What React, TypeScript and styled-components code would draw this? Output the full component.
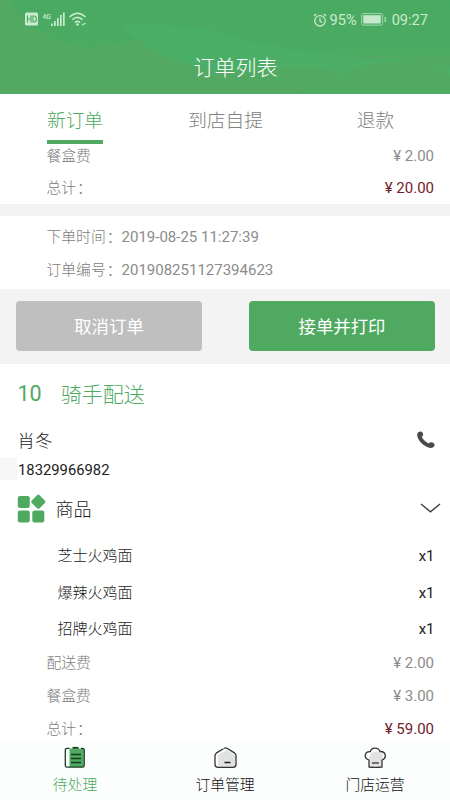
import React from 'react';
import styled, { createGlobalStyle } from 'styled-components';

const GREEN = '#4fa961';

const GlobalStyle = createGlobalStyle`
  * { box-sizing: border-box; }
  body { margin: 0; background: #fff; }
`;

const Screen = styled.div`
  width: 450px;
  height: 800px;
  display: flex;
  flex-direction: column;
  overflow: hidden;
  background: #fefffe;
  color: #222;
  font-family: Roboto, 'Noto Sans CJK SC', sans-serif;
  font-size: 14.8px;
  font-weight: 300;
  white-space: pre;
`;

const Header = styled.header`
  flex: none;
  height: 94px;
  display: grid;
  grid-template-rows: 39px 55px;
  color: #fff;
  background: ${GREEN};
  overflow: hidden;
`;

const HeaderWaves = styled.svg`
  grid-area: 1 / 1 / 3 / 2;
  display: block;
`;

const StatusBar = styled.div`
  grid-area: 1 / 1 / 2 / 2;
  z-index: 1;
  display: flex;
  align-items: center;
  justify-content: space-between;
  padding: 0 22px 0 25px;
  color: #caebd0;
  font-size: 14.6px;
  font-weight: 400;
`;

const StatusGroup = styled.div`
  display: flex;
  align-items: center;
`;

const Percent = styled.span`
  margin: 0 4px 0 3px;
`;

const Clock = styled.span`
  margin-left: 5px;
`;

const Title = styled.h1`
  grid-area: 2 / 1 / 3 / 2;
  z-index: 1;
  margin: 0;
  padding-left: 21px;
  text-align: center;
  font-size: 21px;
  line-height: 58px;
  font-weight: 300;
`;

const Tabs = styled.nav`
  flex: none;
  height: 50px;
  display: grid;
  grid-template-columns: 150px 151px 149px;
  justify-items: center;
`;

const Tab = styled.div<{ $active?: boolean }>`
  height: 50px;
  line-height: 54px;
  font-size: 18.7px;
  color: ${p => (p.$active ? GREEN : '#808080')};
  border-bottom: 4px solid ${p => (p.$active ? GREEN : 'transparent')};
`;

const Summary = styled.section<{ $height: number; $top?: number }>`
  flex: none;
  height: ${p => p.$height}px;
  padding: ${p => p.$top ?? 0}px 16px 0 46.5px;
`;

const Line = styled.div<{ $first?: boolean }>`
  display: flex;
  justify-content: space-between;
  height: ${p => (p.$first ? 28 : 33)}px;
  line-height: ${p => (p.$first ? 24 : 33)}px;
  color: #7c7c7c;
`;

const Detail = styled.div`
  display: flex;
  height: 33px;
  line-height: 34px;
  color: #7c7c7c;
`;

const Colon = styled.span`
  margin: 0 -1px 0 1px;
`;

const Value = styled.span`
  margin-left: 1px;
  color: #8c8c8c;
  font-size: 15px;
  font-weight: 400;
`;

const Total = styled.span`
  color: #74202b;
  font-size: 15px;
  font-weight: 400;
`;

const Divider = styled.div`
  flex: none;
  height: 12px;
  background: #f3f3f3;
`;

const Actions = styled.div`
  flex: none;
  height: 75px;
  display: flex;
  justify-content: space-between;
  padding: 12px 15px 0 16px;
  background: #f3f3f3;
`;

const ActionButton = styled.button<{ $primary?: boolean }>`
  width: 186px;
  height: 50px;
  padding: 2px 0 0;
  border: 0;
  border-radius: 4px;
  background: ${p => (p.$primary ? GREEN : '#bfbfbf')};
  color: #fff;
  font: 400 17.4px/48px Roboto, 'Noto Sans CJK SC', sans-serif;
`;

const Order = styled.section`
  flex: 1;
  min-height: 0;
  overflow: hidden;
`;

const OrderHeading = styled.h2`
  display: flex;
  align-items: center;
  gap: 19px;
  height: 58px;
  margin: 0;
  padding-left: 17.5px;
  color: ${GREEN};
  font-size: 21px;
  font-weight: 300;
`;

const OrderNumber = styled.span`
  font-size: 21.5px;
  font-weight: 400;
`;

const Customer = styled.div`
  display: flex;
  justify-content: space-between;
  align-items: center;
  height: 35px;
  padding: 0 15px 0 17.5px;
  font-size: 17.4px;
`;

const Phone = styled.div`
  height: 24px;
  line-height: 26px;
  padding-left: 18px;
  font-weight: 400;
  background: linear-gradient(#f7f7f7, #f7f7f7) 0 1px / 17px 22px no-repeat;
`;

const GoodsHeading = styled.div`
  display: flex;
  align-items: center;
  height: 54px;
  padding: 0 9px 0 17px;
  font-size: 18px;
`;

const GoodsName = styled.span`
  flex: 1;
  margin: -1px 0 0 9.5px;
`;

const Products = styled.div`
  padding-top: 2px;
`;

const Product = styled.div`
  display: flex;
  justify-content: space-between;
  height: 36.5px;
  line-height: 38px;
  padding: 0 15.5px 0 57.5px;
  font-size: 15px;
  font-weight: 300;
`;

const Quantity = styled.span`
  font-weight: 400;
`;

const BottomNav = styled.nav`
  flex: none;
  height: 60px;
  display: grid;
  grid-template-columns: repeat(3, 1fr);
  background: #fcfefd;
`;

const NavItem = styled.div<{ $active?: boolean }>`
  display: flex;
  flex-direction: column;
  align-items: center;
  padding-top: 6px;
  line-height: 24px;
  color: ${p => (p.$active ? GREEN : '#111')};
  svg { display: block; margin-bottom: 4px; }
`;

const Waves = () => (
  <HeaderWaves width="450" height="94" viewBox="0 0 450 94">
    <defs>
      <linearGradient id="sky" x1="0" y1="0" x2="0" y2="1">
        <stop offset="0" stopColor="#49aa61" />
        <stop offset="1" stopColor="#4eab63" />
      </linearGradient>
      <linearGradient id="band" x1="0" y1="0" x2="0" y2="1">
        <stop offset="0" stopColor="#48b06a" />
        <stop offset="1" stopColor="#4db26d" />
      </linearGradient>
    </defs>
    <rect width="450" height="94" fill="url(#sky)" />
    <path d="M0 0H10C25 28 58 47 94 47C112 46 126 42 137 38C160 52 174 62 202 66C226 70 253 67 284 60L330 55H450V94H0Z" fill="#51a962" />
    <path d="M120 26C158 23 189 25 218 32C252 43 284 49 323 53C354 58 370 60 399 58C423 56 437 64 450 67V94H365C345 72 320 64 284 67C244 72 203 75 181 62C151 51 137 39 120 26Z" fill="url(#band)" opacity=".6" />
    <path d="M330 78C365 65 382 60 413 59C432 60 440 68 450 76V94H300Z" fill="#51aa61" />
  </HeaderWaves>
);

const SignalIcons = () => (
  <svg width="63" height="17" viewBox="25 10.5 63 17" fill="#caebd0">
    <rect x="25" y="12" width="13" height="13" rx="1.5" />
    <path d="M27.5 15v7M31 15v7M27.5 18.5H31M33 15.5v6h1.2c3 0 3-6 0-6Z" fill="none" stroke={GREEN} strokeWidth="1.2" />
    <text x="42.5" y="18" fontSize="7.5" fontWeight="500" fontFamily="Roboto, sans-serif" textLength="8.5" lengthAdjust="spacingAndGlyphs">4G</text>
    <path d="M51 23h1.7v2.5H51zM54 20.5h1.7v5H54zM57 17.5h1.7v8H57zM60 14.5h1.7v11H60zM63 12h1.7v13.5H63z" />
    <path d="M69.5 16.5q8-7.5 16 0M72.3 19.2q5.2-4.7 10.4 0M74.8 22q2.7-2.3 5.4 0" fill="none" stroke="#caebd0" strokeWidth="1.5" />
    <circle cx="77.5" cy="24" r="1.3" />
    <path d="m81.5 24.7 1.2-2 1.2 2zM83.5 22.5h2.4l-1.2 2z" />
  </svg>
);

const AlarmIcon = () => (
  <svg width="14" height="14" viewBox="0 0 14 14" fill="none" stroke="#caebd0" strokeWidth="1.3">
    <circle cx="7" cy="7.8" r="5.2" />
    <path d="M7 4.8v3.3l2.2 1.3M1 3l2.3-2M13 3l-2.3-2" />
  </svg>
);

const BatteryIcon = () => (
  <svg width="26" height="13" viewBox="0 0 26 13">
    <rect x=".6" y=".6" width="21" height="11.5" rx="1.3" fill="none" stroke="#9fd7ab" />
    <rect x="2.2" y="2.2" width="17.6" height="8.3" fill="#c6e8cc" />
    <path d="M24.3 4v5" stroke="#9fd7ab" strokeWidth="1.5" />
  </svg>
);

const PhoneIcon = () => (
  <svg width="18" height="18" viewBox="0 0 18 18">
    <path d="M1.3 1.3C2.6.2 4.6.1 5.5 1.5c1 1.6.8 3.2-.8 4.3 1.2 2.5 3.8 5.2 6.9 6.6 1.2-1.3 3.3-1.6 4.9-.4 1.6 1.2 1.5 2.9 0 4-1.8 1.3-4.4 1.4-7.8-.7C4.500 13 1 9 .3 5.100.1 3.500.3 2.100 1.300 1.300Z" fill="#4a4a4a" />
  </svg>
);

const GoodsIcon = () => (
  <svg width="29" height="29" viewBox="0 0 29 29" fill={GREEN}>
    <rect x=".8" y="2" width="12" height="12" rx="2.2" />
    <rect x=".8" y="16.5" width="12" height="12" rx="2.2" />
    <rect x="15.3" y="16.5" width="12" height="12" rx="2.2" />
    <rect x="15.8" y="2.2" width="11" height="11" rx="1.8" transform="rotate(45 21.3 7.7)" />
  </svg>
);

const ChevronIcon = () => (
  <svg width="21" height="10" viewBox="0 0 21 10" fill="none" stroke="#444" strokeWidth="1.5">
    <path d="m1 1 9.5 7.8L20 1" />
  </svg>
);

const PendingIcon = () => (
  <svg width="22" height="23" viewBox="0 0 22 23" fill="none">
    <path d="M5.5 2.5h13q1.2 0 1.2 1.5v15.5q0 1.5-1.2 1.5h-13z" fill={GREEN} />
    <path d="M5.5 2.3H3q-1.7 0-1.7 1.7v15.5q0 1.7 1.7 1.7h15.5q1.7 0 1.7-1.7V4q0-1.7-1.7-1.7h-1.5M7 8.5h10M7 12.5h10M7 16.5h10" stroke="#183c22" strokeWidth="1.3" />
    <path d="M8.5 1.8h6" stroke="#183c22" strokeWidth="1.8" />
  </svg>
);

const HouseIcon = () => (
  <svg width="23" height="23" viewBox="0 0 23 23" fill="none">
    <path d="M4 9 13 4l8 5v12H5q-1 0-1-1Z" fill="#e0e2e1" />
    <path d="M9.5 2.7 2.5 6.9Q1 8 1 9.5v9Q1 21.3 4 21.3h15q3 0 3-2.8v-9Q22 8 20.5 6.9l-7.6-4.6q-1.4-1-2.7.2" stroke="#333" strokeWidth="1.3" />
    <path d="M10.5 16.5h6" stroke="#222" strokeWidth="1.5" />
  </svg>
);

const ChefHatIcon = () => (
  <svg width="23" height="23" viewBox="0 0 23 23" fill="none">
    <path d="M7 7q7-4 12 1l-1.5 12H6.5L5 12Z" fill="#e2e2e2" />
    <path d="M5 21V14C-.4 12.4.1 5.4 6.3 5.7 7.4 1 14.6 1 15.9 5.5c6.3-.4 7.2 6.8 2.1 8.5v7Q11.5 21.8 5 21Z" stroke="#333" strokeWidth="1.3" strokeLinejoin="round" />
    <path d="M8 17h7" stroke="#333" strokeWidth="1.3" />
  </svg>
);

const products = ['芝士火鸡面', '爆辣火鸡面', '招牌火鸡面'];

export default function App() {
  return (
    <Screen>
      <GlobalStyle />
      <Header>
        <Waves />
        <StatusBar>
          <SignalIcons />
          <StatusGroup>
            <AlarmIcon />
            <Percent>95%</Percent>
            <BatteryIcon />
            <Clock>09:27</Clock>
          </StatusGroup>
        </StatusBar>
        <Title>订单列表</Title>
      </Header>
      <Tabs>
        <Tab $active>新订单</Tab>
        <Tab>到店自提</Tab>
        <Tab>退款</Tab>
      </Tabs>
      <Summary $height={60}>
        <Line $first><span>餐盒费</span><Value>¥ 2.00</Value></Line>
        <Line><span>总计<Colon>：</Colon></span><Total>¥ 20.00</Total></Line>
      </Summary>
      <Divider />
      <Summary $height={73} $top={4}>
        <Detail>下单时间<Colon>：</Colon><Value>2019-08-25 11:27:39</Value></Detail>
        <Detail>订单编号<Colon>：</Colon><Value>201908251127394623</Value></Detail>
      </Summary>
      <Actions>
        <ActionButton>取消订单</ActionButton>
        <ActionButton $primary>接单并打印</ActionButton>
      </Actions>
      <Order>
        <OrderHeading><OrderNumber>10</OrderNumber>骑手配送</OrderHeading>
        <Customer>肖冬<PhoneIcon /></Customer>
        <Phone>18329966982</Phone>
        <GoodsHeading><GoodsIcon /><GoodsName>商品</GoodsName><ChevronIcon /></GoodsHeading>
        <Products>
          {products.map(name => (
            <Product key={name}>{name}<Quantity>x1</Quantity></Product>
          ))}
        </Products>
        <Summary $height={99}>
          <Line><span>配送费</span><Value>¥ 2.00</Value></Line>
          <Line><span>餐盒费</span><Value>¥ 3.00</Value></Line>
          <Line><span>总计<Colon>：</Colon></span><Total>¥ 59.00</Total></Line>
        </Summary>
      </Order>
      <BottomNav>
        <NavItem $active><PendingIcon />待处理</NavItem>
        <NavItem><HouseIcon />订单管理</NavItem>
        <NavItem><ChefHatIcon />门店运营</NavItem>
      </BottomNav>
    </Screen>
  );
}
